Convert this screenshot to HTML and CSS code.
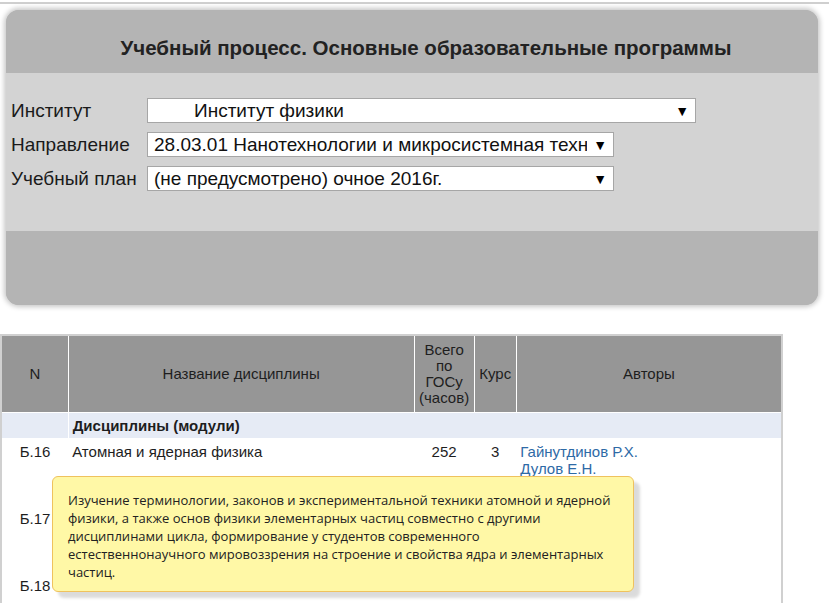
FILE: index.html
```html
<!DOCTYPE html>
<html lang="ru">
<head>
<meta charset="utf-8">
<title>Учебный процесс</title>
<link rel="stylesheet" href="styles.css">
</head>
<body>
<div class="topline"></div>
<div class="panel">
  <div class="panel-head">Учебный процесс. Основные образовательные программы</div>
  <div class="panel-body">
    <div class="field">
      <span class="label">Институт</span>
      <div class="select wide"><span class="sel-text indent">Институт физики</span><span class="arrow">▼</span></div>
    </div>
    <div class="field">
      <span class="label">Направление</span>
      <div class="select"><span class="sel-text">28.03.01 Нанотехнологии и микросистемная техника</span><span class="arrow">▼</span></div>
    </div>
    <div class="field">
      <span class="label">Учебный план</span>
      <div class="select"><span class="sel-text">(не предусмотрено) очное 2016г.</span><span class="arrow">▼</span></div>
    </div>
  </div>
  <div class="panel-foot"></div>
</div>

<div class="table-wrap">
  <table class="plan">
    <colgroup>
      <col class="c-n"><col class="c-name"><col class="c-hours"><col class="c-kurs"><col class="c-auth">
    </colgroup>
    <thead>
      <tr>
        <th>N</th>
        <th>Название дисциплины</th>
        <th>Всего<br>по<br>ГОСу<br>(часов)</th>
        <th>Курс</th>
        <th>Авторы</th>
      </tr>
    </thead>
    <tbody>
      <tr class="section"><td></td><td colspan="4">Дисциплины (модули)</td></tr>
      <tr>
        <td class="num">Б.16</td>
        <td>Атомная и ядерная физика</td>
        <td class="num">252</td>
        <td class="num">3</td>
        <td><a href="#">Гайнутдинов Р.Х.</a><br><a href="#">Дулов Е.Н.</a></td>
      </tr>
      <tr>
        <td class="num">Б.17</td>
        <td></td>
        <td class="num"></td>
        <td class="num"></td>
        <td></td>
      </tr>
      <tr>
        <td class="num">Б.18</td>
        <td></td>
        <td class="num"></td>
        <td class="num"></td>
        <td></td>
      </tr>
    </tbody>
  </table>
  <div class="tooltip">Изучение терминологии, законов и экспериментальной техники атомной и ядерной физики, а также основ физики элементарных частиц совместно с другими дисциплинами цикла, формирование у студентов современного естественнонаучного мировоззрения на строение и свойства ядра и элементарных частиц.</div>
</div>
</body>
</html>
```

FILE: styles.css
```css
html, body {
  margin: 0;
  padding: 0;
  background: #ffffff;
  font-family: "Liberation Sans", Arial, sans-serif;
  color: #222222;
  overflow: hidden;
}

.topline {
  height: 0;
  margin-top: 2px;
  border-top: 2px solid #cfcfcf;
}

.panel {
  margin: 6px 11px 0 6px;
  border-radius: 13px;
  overflow: hidden;
  box-shadow: 0 0 5px 2px rgba(0, 0, 0, 0.22);
  background: #b4b4b4;
}

.panel-head {
  height: 63px;
  display: flex;
  align-items: center;
  justify-content: center;
  padding-left: 28px;
  padding-top: 12px;
  box-sizing: border-box;
  font-size: 20.5px;
  font-weight: bold;
  color: #222222;
  background: #b4b4b4;
}

.panel-body {
  height: 158px;
  box-sizing: border-box;
  background: #d3d3d3;
  padding: 25px 0 0 5px;
  display: flex;
  flex-direction: column;
  gap: 9px;
}

.panel-foot {
  height: 74px;
  background: #b4b4b4;
}

.field {
  display: flex;
  align-items: center;
  height: 25px;
}

.label {
  width: 136px;
  flex: none;
  font-size: 19px;
  color: #1a1a1a;
}

.select {
  width: 467px;
  height: 25px;
  box-sizing: border-box;
  background: #ffffff;
  border: 1px solid #a6a6a6;
  display: flex;
  align-items: center;
  padding: 0 6px 0 6px;
  font-size: 19px;
  color: #111111;
}

.select.wide {
  width: 549px;
}

.sel-text {
  flex: 1;
  white-space: nowrap;
  overflow: hidden;
}

.sel-text.indent {
  padding-left: 40px;
}

.arrow {
  flex: none;
  font-size: 14px;
  margin-left: 6px;
  color: #000;
}

.table-wrap {
  position: relative;
  margin-top: 29px;
}

.plan {
  width: 783px;
  border-collapse: collapse;
  border: 2px solid #d0d0d0;
  font-size: 15px;
  table-layout: fixed;
}

.c-n { width: 67px; }
.c-name { width: 345px; }
.c-hours { width: 60px; }
.c-kurs { width: 42px; }
.c-auth { width: 265px; }

.plan th {
  background: #969696;
  color: #1e1e1e;
  font-weight: normal;
  border: 1px solid #ffffff;
  height: 76px;
  padding: 0 1px;
  line-height: 16px;
  text-align: center;
  vertical-align: middle;
}

.plan thead tr th:first-child { border-left: 0; }
.plan thead tr th:last-child { border-right: 0; }
.plan thead tr th { border-top: 0; }

.plan td {
  padding: 5px 4px;
  vertical-align: top;
  line-height: 17px;
  height: 57px;
  color: #1e1e1e;
}

.plan tr.section td {
  background: #e6ebf5;
  font-weight: bold;
  height: 16px;
  padding: 4px 4px;
  border-right: 1px solid #ffffff;
}

.plan td.num {
  text-align: center;
}

.plan a {
  color: #2e6aa6;
  text-decoration: none;
}

.tooltip {
  position: absolute;
  left: 52px;
  top: 142px;
  width: 582px;
  height: 116px;
  box-sizing: border-box;
  padding: 14px 14px 0 15px;
  background: #fff8a6;
  border: 1px solid #efc25e;
  border-radius: 6px;
  box-shadow: 6px 6px 3px rgba(0, 0, 0, 0.14);
  font-family: "Open Sans", "Noto Sans", sans-serif;
  font-size: 13px;
  line-height: 18px;
  color: #222222;
}
```
